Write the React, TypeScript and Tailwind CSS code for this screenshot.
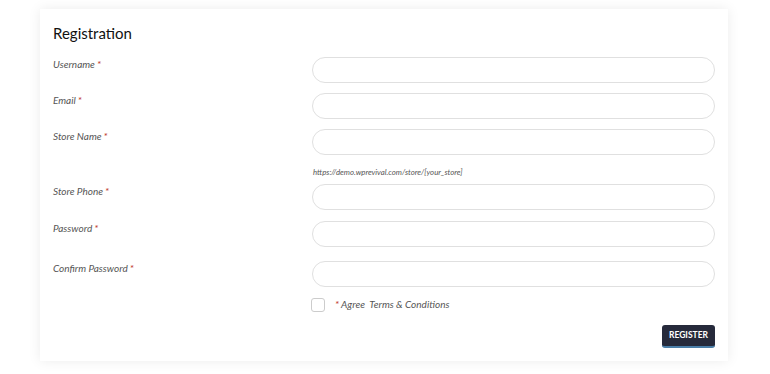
import React from "react";

const fields = [
  { label: "Username", mt: "mt-0" },
  { label: "Email", mt: "mt-[10px]" },
  { label: "Store Name", mt: "mt-[10px]", hint: "https://demo.wprevival.com/store/[your_store]" },
  { label: "Store Phone", mt: "mt-[7px]" },
  { label: "Password", mt: "mt-[11px]" },
  { label: "Confirm Password", mt: "mt-[14px]" },
];

function Field({ label, mt, hint }: { label: string; mt: string; hint?: string }) {
  return (
    <div className={`flex ${mt}`}>
      <label className="w-[259px] shrink-0 pt-[1px] text-[10px] italic leading-[12px] text-[#555]">
        {label}
        <span className="ml-[2px] text-[#c0392b]">*</span>
      </label>
      <div className="flex-1">
        <input
          type="text"
          className="block h-[26px] w-full rounded-full border border-[#e0e0e0] bg-white px-3 outline-none"
        />
        {hint && (
          <p className="mt-[12px] pl-[1px] text-[7.8px] italic leading-[10px] text-[#555]">{hint}</p>
        )}
      </div>
    </div>
  );
}

export default function App() {
  return (
    <div className="min-h-[374px] bg-white px-[40px] pt-[9px] font-['Lato','Open_Sans',sans-serif]">
      <div className="w-[688px] bg-white px-[13px] pb-[13px] pt-[14px] shadow-[0_0_12px_rgba(0,0,0,0.08)]">
        <h2 className="text-[15px] font-normal leading-[20px] text-[#111]">Registration</h2>
        <div className="mt-[14px]">
          {fields.map((f) => (
            <Field key={f.label} {...f} />
          ))}
        </div>
        <div className="mt-[10px] flex items-center pl-[258px]">
          <span className="h-[14px] w-[14px] rounded-[3px] border border-[#ccc] bg-white" />
          <span className="ml-[10px] text-[10px] italic text-[#555]">
            <span className="text-[#c0392b]">*</span> Agree&nbsp; Terms &amp; Conditions
          </span>
        </div>
        <div className="mt-[13px] flex justify-end">
          <button
            type="button"
            className="h-[23px] rounded-[3px] border-b-2 border-[#4a7ea8] bg-[#262a3b] px-[7px] text-[8.5px] font-bold uppercase text-white"
          >
            Register
          </button>
        </div>
      </div>
    </div>
  );
}
